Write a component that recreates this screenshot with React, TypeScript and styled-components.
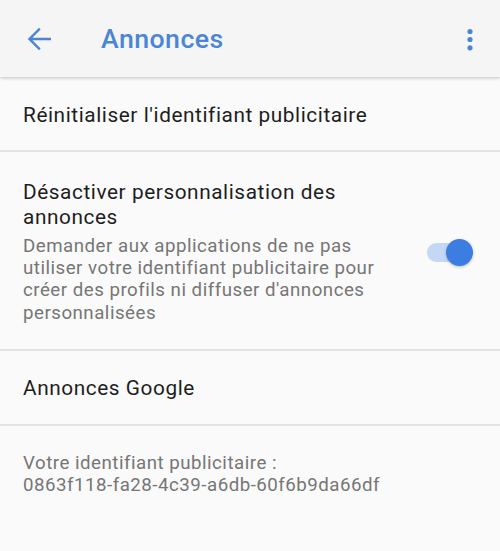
import React from "react";
import styled, { createGlobalStyle } from "styled-components";

const GlobalStyle = createGlobalStyle`
  html, body {
    margin: 0;
    padding: 0;
    background: #fafafa;
    font-family: Roboto, "Noto Sans", Arial, sans-serif;
    -webkit-font-smoothing: antialiased;
  }
`;

const Screen = styled.div`
  width: 500px;
  height: 551px;
  background: #fafafa;
  overflow: hidden;
`;

const Header = styled.header`
  position: relative;
  z-index: 1;
  height: 77px;
  display: flex;
  align-items: center;
  padding: 0 18px 0 21px;
  background: #f5f5f5;
  box-shadow: 0 1px 3px rgba(0, 0, 0, 0.16), 0 2px 4px rgba(0, 0, 0, 0.06);
  color: #4a85d6;
`;

const IconButton = styled.button<{ $narrow?: boolean }>`
  width: ${(p) => (p.$narrow ? "24px" : "36px")};
  height: 36px;
  padding: 0;
  border: none;
  background: transparent;
  color: inherit;
  display: flex;
  align-items: center;
  justify-content: center;
`;

const Title = styled.h1`
  flex: 1;
  margin: 0 0 0 44px;
  font-size: 26.7px;
  font-weight: 500;
  letter-spacing: 0.45px;
  line-height: 32px;
  color: #4a85d6;
`;

const List = styled.main`
  display: flex;
  flex-direction: column;
`;

const Row = styled.div<{ $tall?: boolean }>`
  display: flex;
  align-items: center;
  min-height: ${(p) => (p.$tall ? "auto" : "75px")};
  padding: ${(p) => (p.$tall ? "28px 27px 25px 23px" : "3px 27px 0 23px")};
  border-bottom: 2px solid #e2e2e2;
  box-sizing: border-box;
  gap: 28px;
`;

const TextCol = styled.div`
  flex: 1;
  display: flex;
  flex-direction: column;
  gap: 5px;
`;

const RowTitle = styled.div`
  font-size: 20.8px;
  letter-spacing: 0.57px;
  line-height: 25px;
  color: #1e1e1e;
`;

const Summary = styled.div`
  font-size: 18.7px;
  letter-spacing: 0.5px;
  line-height: 22.2px;
  color: #767676;
`;

const Footer = styled.div`
  padding: 26px 23px;
  font-size: 18.7px;
  letter-spacing: 0.5px;
  line-height: 22.4px;
  color: #767676;
`;

const Switch = styled.div`
  position: relative;
  width: 50px;
  height: 28px;
  flex: none;
`;

const Track = styled.div<{ $on: boolean }>`
  position: absolute;
  left: 4px;
  right: 4px;
  top: 5px;
  height: 19px;
  border-radius: 10px;
  background: ${(p) => (p.$on ? "#c4d7f4" : "#bdbdbd")};
`;

const Thumb = styled.div<{ $on: boolean }>`
  position: absolute;
  top: 1px;
  ${(p) => (p.$on ? "right: 0;" : "left: 0;")}
  width: 27px;
  height: 27px;
  border-radius: 50%;
  background: ${(p) => (p.$on ? "#3b7de0" : "#f1f1f1")};
  box-shadow: 0 1px 3px rgba(0, 0, 0, 0.25);
`;

const BackIcon = () => (
  <svg width="36" height="36" viewBox="0 0 24 24" fill="currentColor">
    <path d="M20 11.1H7.6l5.5-5.5L12 4.5 4.5 12l7.5 7.5 1.1-1.1-5.5-5.5H20z" />
  </svg>
);

const MoreIcon = () => (
  <svg width="24" height="36" viewBox="0 0 24 36" fill="currentColor">
    <circle cx="12" cy="10.5" r="2.6" />
    <circle cx="12" cy="18.5" r="2.6" />
    <circle cx="12" cy="26.8" r="2.6" />
  </svg>
);

export default function App() {
  return (
    <Screen>
      <GlobalStyle />
      <Header>
        <IconButton aria-label="Retour">
          <BackIcon />
        </IconButton>
        <Title>Annonces</Title>
        <IconButton $narrow aria-label="Plus d'options">
          <MoreIcon />
        </IconButton>
      </Header>
      <List>
        <Row>
          <RowTitle>Réinitialiser l'identifiant publicitaire</RowTitle>
        </Row>
        <Row $tall>
          <TextCol>
            <RowTitle>Désactiver personnalisation des annonces</RowTitle>
            <Summary>
              Demander aux applications de ne pas utiliser votre identifiant
              publicitaire pour créer des profils ni diffuser d'annonces
              personnalisées
            </Summary>
          </TextCol>
          <Switch>
            <Track $on />
            <Thumb $on />
          </Switch>
        </Row>
        <Row>
          <RowTitle>Annonces Google</RowTitle>
        </Row>
        <Footer>
          Votre identifiant publicitaire :
          <br />
          0863f118-fa28-4c39-a6db-60f6b9da66df
        </Footer>
      </List>
    </Screen>
  );
}
